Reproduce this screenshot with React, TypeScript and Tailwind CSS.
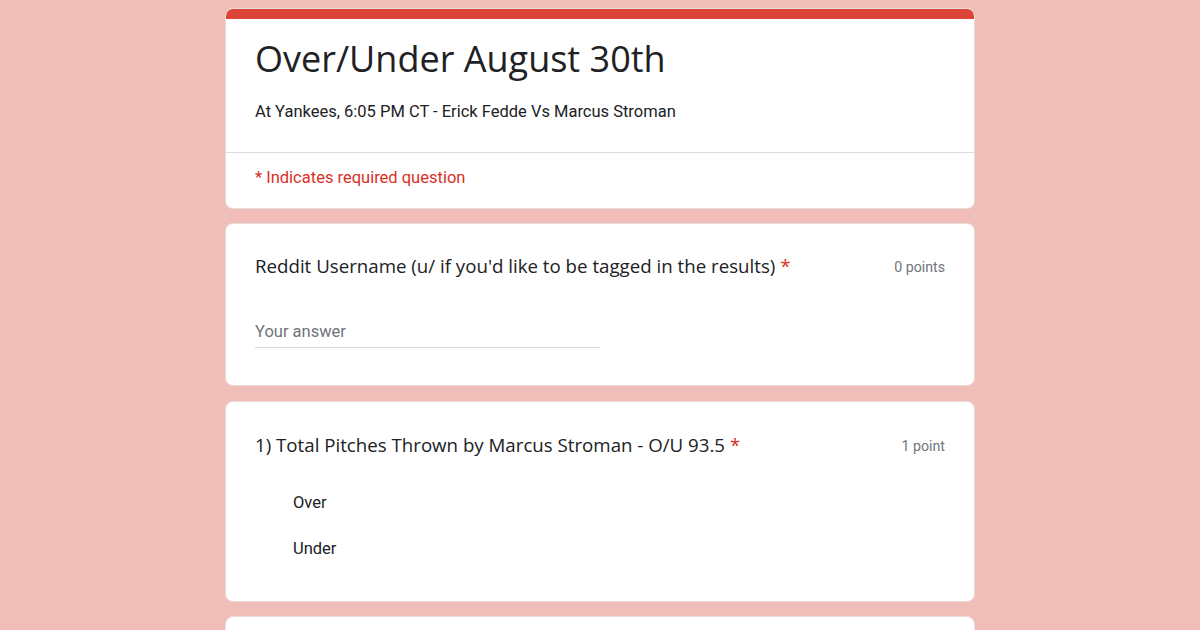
import React from 'react';

const sans = "font-['Roboto','Liberation_Sans',sans-serif]";
const display = "font-['Open_Sans','Roboto',sans-serif]";

function Card({ children, className = '' }: { children: React.ReactNode; className?: string }) {
  return <div className={`bg-white rounded-lg border border-[#e9dcdb] ${className}`}>{children}</div>;
}

export default function App() {
  return (
    <div className={`w-[1200px] h-[630px] overflow-hidden bg-[#f0bdb9] ${sans}`}>
      <div className="w-[750px] mx-auto pt-2 flex flex-col gap-[14px]">
        {/* header */}
        <Card className="overflow-hidden">
          <div className="h-[10px] bg-[#db4437]" />
          <div className="px-[29px] pt-[17px] pb-[30px]">
            <h1 className={`${display} text-[36px] leading-[46px] text-[#202124]`}>Over/Under August 30th</h1>
            <p className="mt-[20px] text-[16.5px] leading-[20px] text-[#202124]">
              At Yankees, 6:05 PM CT - Erick Fedde Vs Marcus Stroman
            </p>
          </div>
          <div className="border-t border-[#dadce0] px-[29px] pt-[15px] pb-[20px]">
            <p className="text-[16.5px] leading-[20px] text-[#d93025]">* Indicates required question</p>
          </div>
        </Card>

        {/* username */}
        <Card className="px-[29px] pt-[29px] pb-[37px]">
          <div className="flex items-center justify-between">
            <p className={`${display} text-[18.7px] leading-[26px] text-[#202124]`}>
              Reddit Username (u/ if you'd like to be tagged in the results) <span className="text-[#d93025]">*</span>
            </p>
            <span className="pt-[3px] text-[14.2px] text-[#70757a]">0 points</span>
          </div>
          <div className="mt-[41px] w-[345px] border-b border-[#dadce0] pb-[3px]">
            <span className="text-[16.5px] leading-[22px] text-[#70757a]">Your answer</span>
          </div>
        </Card>

        {/* question 1 */}
        <Card className="mt-[1px] px-[29px] pt-[30px] pb-[41px]">
          <div className="flex items-center justify-between">
            <p className={`${display} text-[18.7px] leading-[26px] text-[#202124]`}>
              1) Total Pitches Thrown by Marcus Stroman - O/U 93.5 <span className="text-[#d93025]">*</span>
            </p>
            <span className="pt-[3px] text-[14.2px] text-[#70757a]">1 point</span>
          </div>
          <div className="mt-[34px] pl-[38px] flex flex-col gap-[24px]">
            <span className="text-[16.5px] leading-[22px] text-[#202124]">Over</span>
            <span className="text-[16.5px] leading-[22px] text-[#202124]">Under</span>
          </div>
        </Card>

        <Card className="h-[60px]">
          <div />
        </Card>
      </div>
    </div>
  );
}
